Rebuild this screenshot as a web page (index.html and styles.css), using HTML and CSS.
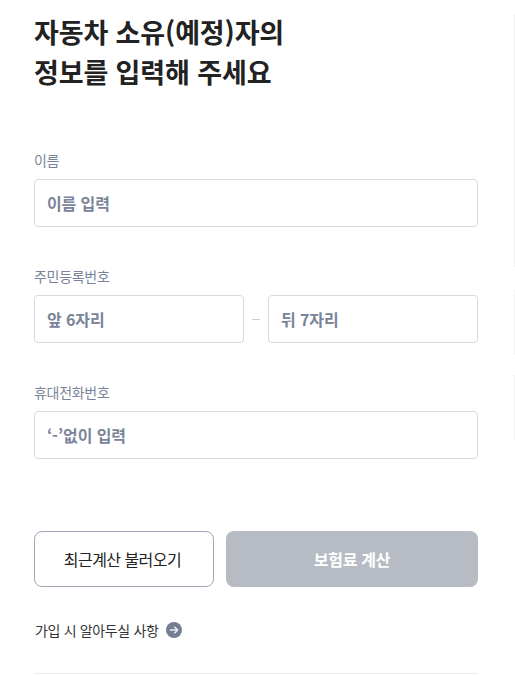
FILE: index.html
```html
<!DOCTYPE html>
<html lang="ko">
<head>
<meta charset="utf-8">
<title>자동차 보험료 계산</title>
<link rel="stylesheet" href="styles.css">
</head>
<body>
<div class="page">
  <main class="content">
    <h1 class="title">자동차 소유(예정)자의<br>정보를 입력해 주세요</h1>
    <form class="form">
      <div class="field">
        <label class="label" for="name">이름</label>
        <input class="input" id="name" type="text" placeholder="이름 입력">
      </div>
      <div class="field">
        <label class="label" for="rrn1">주민등록번호</label>
        <div class="rrn">
          <input class="input" id="rrn1" type="text" placeholder="앞 6자리">
          <span class="dash"></span>
          <input class="input" id="rrn2" type="text" placeholder="뒤 7자리">
        </div>
      </div>
      <div class="field">
        <label class="label" for="phone">휴대전화번호</label>
        <input class="input" id="phone" type="text" placeholder="‘-’없이 입력">
      </div>
      <div class="actions">
        <button class="btn btn-outline" type="button">최근계산 불러오기</button>
        <button class="btn btn-disabled" type="button">보험료 계산</button>
      </div>
    </form>
    <a class="notice" href="#">
      <span>가입 시 알아두실 사항</span>
      <svg class="notice-icon" width="16" height="16" viewBox="0 0 16 16" aria-hidden="true">
        <circle cx="8" cy="8" r="8" fill="#737e95"/>
        <path d="M3.8 8H11.6M8.4 4.8L11.6 8L8.4 11.2" fill="none" stroke="#e8eaee" stroke-width="1.5"/>
      </svg>
    </a>
    <hr class="rule">
  </main>
  <aside class="rail">
    <span class="rail-line rail-a"></span>
    <span class="rail-line rail-b"></span>
    <span class="rail-line rail-c"></span>
  </aside>
</div>
</body>
</html>
```
FILE: styles.css
```css
* { box-sizing: border-box; }
html, body { margin: 0; height: 100%; background: #fff; overflow: hidden; }
body { font-family: "Noto Sans CJK KR", "Noto Sans", sans-serif; }
.page { display: flex; height: 676px; }
.content { width: 514px; padding: 12px 36px 0 34px; }
.title { margin: 0; font-size: 27px; line-height: 40px; font-weight: 700; color: #222; letter-spacing: -0.12px; }
.form { margin-top: 58px; }
.field { display: flex; flex-direction: column; margin-bottom: 39px; }
.label { font-size: 14px; line-height: 20px; color: #7a8499; margin-bottom: 9px; letter-spacing: -0.3px; }
.input { width: 100%; height: 48px; padding: 0 12px; border: 1px solid #d5d9e0; border-radius: 4px; font: 700 16px "Noto Sans CJK KR", sans-serif; color: #222; outline: none; background: #fff; min-width: 0; letter-spacing: -0.1px; }
.input::placeholder { color: #7a8499; opacity: 1; }
.rrn { display: flex; align-items: center; }
.rrn .input { flex: 1; }
.dash { width: 24px; display: flex; justify-content: center; }
.dash::before { content: ""; width: 8px; height: 1px; background: #c9ced6; }
.actions { display: flex; gap: 12px; margin-top: 72px; }
.btn { height: 56px; border-radius: 8px; font: 400 16px "Noto Sans CJK KR", sans-serif; letter-spacing: -0.55px; }
.btn-outline { width: 180px; padding: 0 3px 0 0; background: #fff; border: 1px solid #a0a8b8; color: #222; }
.btn-disabled { flex: 1; background: #b7bcc4; border: 0; color: #fff; font-weight: 700; letter-spacing: -0.3px; }
.notice { display: flex; align-items: center; gap: 8px; margin: 33px 0 0 1px; font-size: 14px; line-height: 20px; color: #333; text-decoration: none; letter-spacing: -0.35px; }
.rule { margin: 33px 0 0; border: 0; border-top: 1px solid #e8eaee; }
.rail { width: 1px; padding-top: 14px; display: flex; flex-direction: column; }
.rail-line { display: block; width: 1px; }
.rail-a { height: 253px; background: #efeff1; }
.rail-b { height: 65px; margin-top: 23px; background: #f5f5f6; }
.rail-c { height: 65px; margin-top: 20px; background: #f5f5f6; }
```
